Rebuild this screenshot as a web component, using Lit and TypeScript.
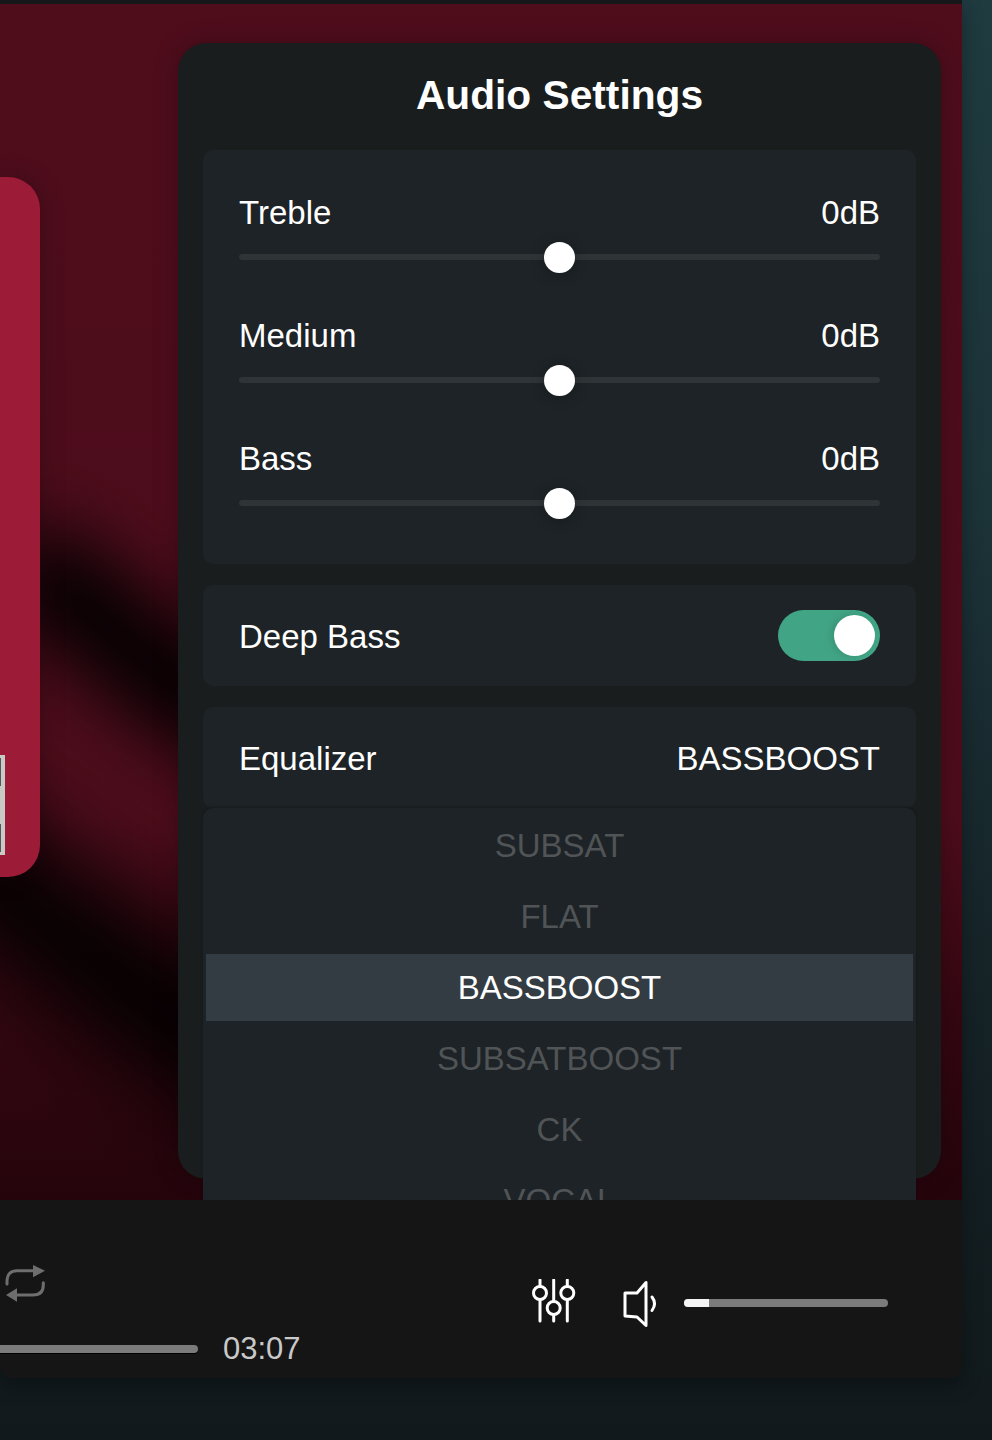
import { LitElement, css, html } from "lit";
import { customElement } from "lit/decorators.js";

const SLIDERS = ["Treble", "Medium", "Bass"];
const PRESETS = ["SUBSAT", "FLAT", "BASSBOOST", "SUBSATBOOST", "CK", "VOCAL"];

@customElement("app-root")
export class AppRoot extends LitElement {
  static styles = css`
    :host {
      display: block;
      width: 992px;
      height: 1440px;
      overflow: hidden;
      background: linear-gradient(180deg, #1f3b40 0%, #1c3338 35%, #152226 70%, #11191c 100%);
      font-family: "Liberation Sans", Arial, sans-serif;
      color: #fff;
    }
    .window {
      width: 962px;
      height: 1378px;
      display: flex;
      flex-direction: column;
      border-radius: 0 0 12px 12px;
      box-shadow: 0 6px 20px rgba(0, 0, 0, 0.35);
    }
    .topbar {
      height: 4px;
      background: #161718;
      flex: none;
    }
    .main {
      position: relative;
      flex: 1;
      overflow: hidden;
      display: flex;
      align-items: flex-start;
      padding: 39px 21px 0 0;
      gap: 138px;
      background: linear-gradient(180deg, #4f0d1c 0%, #4d0c1b 68%, #350711 84%, #25040c 100%);
    }
    .blob {
      position: absolute;
      background: #000;
    }
    .blob.one {
      left: -10px;
      top: 590px;
      width: 270px;
      height: 95px;
      filter: blur(36px);
      transform: rotate(40deg);
    }
    .blob.two {
      left: -120px;
      top: 890px;
      width: 420px;
      height: 120px;
      filter: blur(46px);
      transform: rotate(36deg);
    }
    .art {
      position: relative;
      flex: none;
      width: 40px;
      height: 700px;
      margin-top: 134px;
      padding-top: 578px;
      box-sizing: border-box;
      background: #9c1c38;
      border-radius: 0 32px 32px 0;
      box-shadow: 0 0 24px rgba(0, 0, 0, 0.25);
    }
    .art-edge {
      width: 5px;
      height: 100px;
      box-sizing: border-box;
      padding: 3px 0;
      display: flex;
      flex-direction: column;
      justify-content: space-between;
      background: #c9c9c5;
    }
    .art-edge i {
      display: block;
      width: 1px;
      height: 28px;
      background: #55555a;
    }
    .panel {
      position: relative;
      flex: none;
      width: 763px;
      height: 1136px;
      box-sizing: border-box;
      padding: 0 25px;
      background: #1a1d1e;
      border-radius: 28px;
      box-shadow: 0 0 24px rgba(0, 0, 0, 0.25);
    }
    h1 {
      margin: 0;
      height: 107px;
      line-height: 105px;
      text-align: center;
      font-size: 40.7px;
      font-weight: 700;
    }
    .card {
      background: #1d2326;
      border-radius: 10px;
      margin-bottom: 21px;
    }
    .sliders {
      height: 414px;
      box-sizing: border-box;
      padding: 39px 36px 0;
    }
    .slider {
      height: 123px;
    }
    .row {
      display: flex;
      justify-content: space-between;
      font-size: 33px;
      line-height: 48px;
    }
    .track {
      position: relative;
      height: 6px;
      margin-top: 17px;
      border-radius: 3px;
      background: #2f3436;
    }
    .thumb {
      position: absolute;
      left: 50%;
      top: 50%;
      width: 31px;
      height: 31px;
      margin: -15.5px 0 0 -15.5px;
      border-radius: 50%;
      background: #fff;
      box-shadow: 0 2px 14px rgba(0, 0, 0, 0.25);
    }
    .line {
      height: 101px;
      box-sizing: border-box;
      padding: 0 36px;
      display: flex;
      align-items: center;
      justify-content: space-between;
      font-size: 33px;
    }
    .line > span {
      margin-top: 3px;
    }
    .line.eq {
      position: relative;
      margin-bottom: 0;
    }
    .toggle {
      width: 102px;
      height: 51px;
      box-sizing: border-box;
      padding: 5px;
      display: flex;
      justify-content: flex-end;
      border-radius: 26px;
      background: #41a585;
    }
    .toggle i {
      display: block;
      width: 41px;
      height: 41px;
      border-radius: 50%;
      background: #fff;
      box-shadow: -3px 0 8px rgba(0, 0, 0, 0.12);
    }
    .menu {
      position: absolute;
      left: 0;
      right: 0;
      top: 100%;
      height: 600px;
      box-sizing: border-box;
      padding: 2px 3px;
      background: #1d2326;
      border-radius: 10px;
      box-shadow: 0 -1px 3px rgba(0, 0, 0, 0.25);
    }
    .preset {
      height: 67px;
      margin: 2px 0 4px;
      line-height: 67px;
      text-align: center;
      font-size: 33px;
      color: #505456;
    }
    .preset.on {
      background: #333c42;
      color: #fff;
    }
    .footer {
      flex: none;
      height: 178px;
      box-sizing: border-box;
      display: flex;
      background: #161516;
      border-radius: 0 0 12px 12px;
    }
    .transport {
      width: 300px;
      padding-top: 60px;
      flex: none;
    }
    .transport svg {
      display: block;
    }
    .progress {
      display: flex;
      align-items: center;
      gap: 25px;
      height: 40px;
      margin-top: 24px;
    }
    .progress-bar {
      flex: none;
      width: 198px;
      height: 8px;
      border-radius: 0 4px 4px 0;
      background: #7b7b7b;
      box-shadow: 0 1px 0 #000;
    }
    .time {
      font-size: 31px;
      color: #c9c9c9;
    }
    .controls {
      display: flex;
      align-items: center;
      height: 47px;
      margin: 79px 0 0 232px;
    }
    .controls svg {
      display: block;
      flex: none;
    }
    .eq-icon {
      align-self: flex-start;
    }
    .speaker {
      margin: 2px 23px 0 45px;
    }
    .volume {
      width: 204px;
      height: 8px;
      overflow: hidden;
      border-radius: 4px;
      background: #7b7b7b;
    }
    .volume i {
      display: block;
      width: 25px;
      height: 100%;
      background: #f4f4f4;
    }
  `;

  render() {
    return html`
      <div class="window">
        <div class="topbar"></div>
        <div class="main">
          <div class="blob one"></div>
          <div class="blob two"></div>
          <div class="art">
            <div class="art-edge"><i></i><i></i></div>
          </div>
          <section class="panel">
            <h1>Audio Settings</h1>
            <div class="card sliders">
              ${SLIDERS.map(
                (name) => html`
                  <div class="slider">
                    <div class="row"><span>${name}</span><span>0dB</span></div>
                    <div class="track"><div class="thumb"></div></div>
                  </div>
                `
              )}
            </div>
            <div class="card line">
              <span>Deep Bass</span>
              <div class="toggle"><i></i></div>
            </div>
            <div class="card line eq">
              <span>Equalizer</span>
              <span>BASSBOOST</span>
              <div class="menu">
                ${PRESETS.map(
                  (p) => html`<div class="preset ${p === "BASSBOOST" ? "on" : ""}">${p}</div>`
                )}
              </div>
            </div>
          </section>
        </div>
        <div class="footer">
          <div class="transport">
            <svg width="50" height="45" viewBox="0 0 50 45" fill="none" stroke="#6e6e6e" stroke-width="3" stroke-linecap="round">
              <path d="M7 24v-2q0-11.300 10-11.300h17" />
              <path d="M43.300 22.700v2.300q0 10-10.300 10h-16" />
              <path d="M33 5l12 5.700-12 6.600z" fill="#6e6e6e" stroke="none" />
              <path d="M17 28.300l-11 6.700 11 6.700z" fill="#6e6e6e" stroke="none" />
            </svg>
            <div class="progress">
              <div class="progress-bar"></div>
              <span class="time">03:07</span>
            </div>
          </div>
          <div class="controls">
            <svg class="eq-icon" width="44" height="44" viewBox="0 0 44 44" fill="none" stroke="#fff" stroke-width="3" stroke-linecap="round">
              <path d="M8 1v6.500M8 20.500V42M21.700 1v21.500M21.700 35.500V42M35.300 1v6.500M35.300 20.500V42" />
              <circle cx="8" cy="14" r="6.500" />
              <circle cx="21.700" cy="29" r="6.500" />
              <circle cx="35.300" cy="14" r="6.500" />
            </svg>
            <svg class="speaker" width="40" height="50" viewBox="0 0 40 50" fill="none" stroke="#fff" stroke-width="3" stroke-linecap="round" stroke-linejoin="round">
              <path d="M4 14h12l9-10.500v43L16 38l-12-1z" />
              <path d="M31 18q5 6.500 0 13.500" />
            </svg>
            <div class="volume"><i></i></div>
          </div>
        </div>
      </div>
    `;
  }
}
